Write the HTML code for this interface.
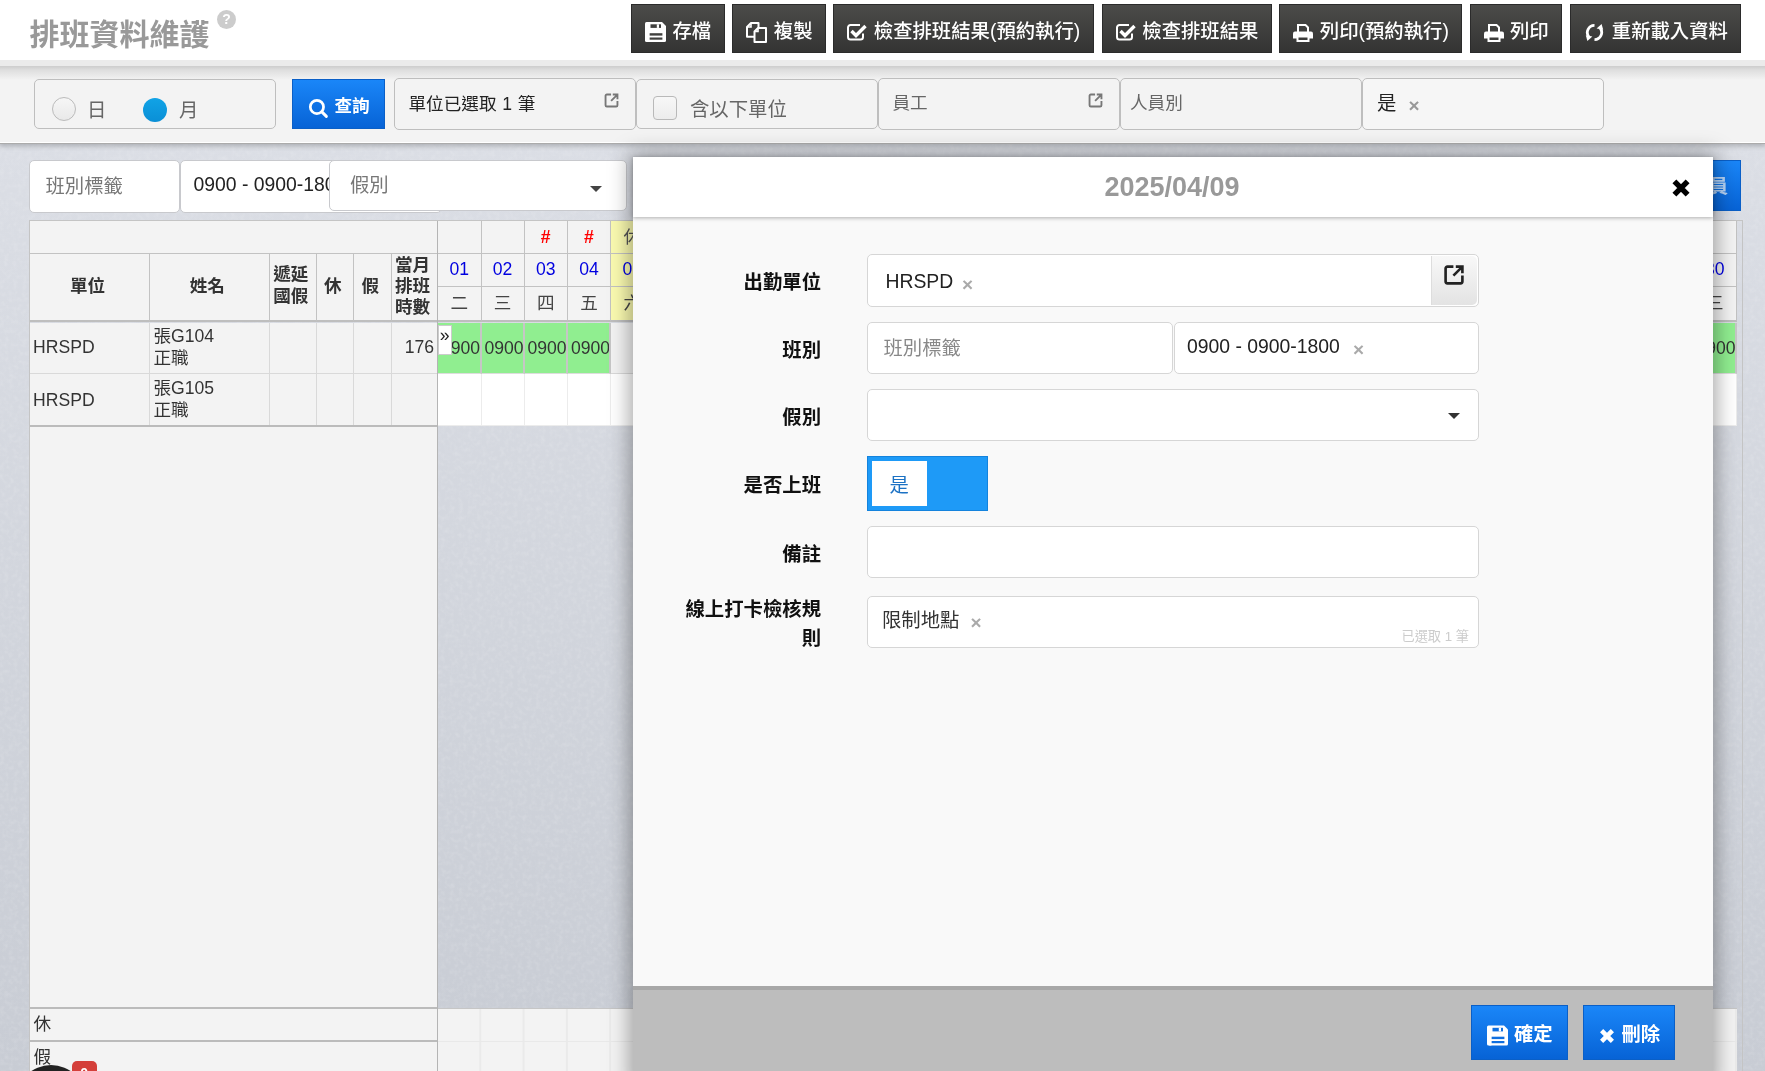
<!DOCTYPE html>
<html lang="zh-Hant">
<head>
<meta charset="utf-8">
<title>排班資料維護</title>
<style>
*{box-sizing:border-box;margin:0;padding:0}
html,body{width:1765px;height:1071px;overflow:hidden}
body{font-family:"Liberation Sans","Noto Sans CJK TC",sans-serif;font-size:16px;color:#222;background:#d0d3d9;position:relative}
.abs{position:absolute}
#root{position:absolute;left:0;top:0;width:1765px;height:1071px;overflow:hidden;will-change:transform;background:linear-gradient(to bottom,#dbdee5 140px,#c8ccd4 1071px)}
#hdr{left:0;top:0;width:1765px;height:60px;background:#fff}
#title{left:29.500px;top:13px;font-size:30px;font-weight:bold;color:#999;line-height:44px;white-space:nowrap}
#help{left:217px;top:10px;width:19px;height:19px;border-radius:50%;background:#ccc;color:#fff;font-size:14px;font-weight:bold;text-align:center;line-height:19px}
.tb{top:4px;height:49px;background:linear-gradient(#4b4b49,#343433);color:#fff;font-size:19.36px;font-weight:500;line-height:53px;white-space:nowrap;border:1px solid #2b2b2b}
.tb span{position:absolute;top:0}
#fbar{left:0;top:60px;width:1765px;height:83px;background:#f3f3f3;border-bottom:1.500px solid #fff;box-shadow:0 1px 0 #ababab,0 2px 5px 1px rgba(0,0,0,.22)}
#fbar:before{content:"";position:absolute;left:0;top:0;width:100%;height:20px;background:linear-gradient(#ebebeb 0,#ebebeb 6px,#cfcfcf 6.500px,#dedede 10px,#f3f3f3 20px)}
.fbox{background:#f3f3f3;border:1px solid #bebebe;border-radius:5px}
.ph{color:#666;white-space:nowrap}
.btn-blue{background:linear-gradient(#1a86f8,#0763d6);color:#fff;font-weight:bold}
.cell{position:absolute;border-right:1px solid #c2c2c2;border-bottom:1px solid #c2c2c2;background:#f3f3f3;white-space:nowrap}
.lab{left:640px;width:181px;text-align:right;font-size:19.36px;line-height:28px;font-weight:bold;color:#111;white-space:nowrap}
.fld{background:#fff;border:1px solid #d6d6d6;border-radius:5px}
</style>
</head>
<body>
<div id="root">
<svg width="0" height="0" style="position:absolute">
<defs>
<symbol id="i-save" viewBox="0 0 21 20"><path d="M0 1.500Q0 0 1.500 0H17L21 4V18.500Q21 20 19.500 20H1.500Q0 20 0 18.500Z" fill="currentColor"/><rect x="5.500" y="2.300" width="10.500" height="3.600" fill="var(--bg,#40403e)"/><rect x="11.800" y="2.300" width="2.200" height="3.600" fill="currentColor"/><rect x="4.400" y="11.200" width="13" height="2.400" fill="var(--bg,#40403e)"/><rect x="4.400" y="15.500" width="13" height="2.200" fill="var(--bg,#40403e)"/><rect x="2.200" y="9.300" width="2.200" height="10.700" fill="currentColor"/></symbol>
<symbol id="i-copy" viewBox="0 0 21 21"><path d="M5 1H12.500V14.800H1V5Z" fill="none" stroke="currentColor" stroke-width="2" stroke-linejoin="round"/><path d="M5 1V5H1" fill="none" stroke="currentColor" stroke-width="1.600"/><path d="M12 6H20V20H8.500V9.500Z" fill="var(--bg,#3e3e3c)" stroke="currentColor" stroke-width="2" stroke-linejoin="round"/><path d="M12 6V9.500H8.500" fill="none" stroke="currentColor" stroke-width="1.600"/></symbol>
<symbol id="i-check" viewBox="0 0 20 18"><path d="M16 10.500V14A2.500 2.500 0 0 1 13.500 16.500H3.500A2.500 2.500 0 0 1 1 14V4.500A2.500 2.500 0 0 1 3.500 2H13" fill="none" stroke="currentColor" stroke-width="2"/><path d="M4.500 8L9 12.500L18.500 3" fill="none" stroke="currentColor" stroke-width="3.400"/></symbol>
<symbol id="i-print" viewBox="0 0 20 18"><path d="M5 8V1H12.500L15 3.500V8" fill="none" stroke="currentColor" stroke-width="2"/><path d="M0 9.500Q0 7.500 2 7.500H18Q20 7.500 20 9.500V14.500H0Z" fill="currentColor"/><rect x="4.500" y="12.500" width="11" height="4.500" fill="var(--bg,#3c3c3a)" stroke="currentColor" stroke-width="2"/></symbol>
<symbol id="i-reload" viewBox="0 0 19 17"><path d="M9.500 1.400A7.100 7.100 0 0 0 3.800 12.800" fill="none" stroke="currentColor" stroke-width="2.800"/><path d="M0.800 11.200L7.400 12.400L2.400 17Z" fill="currentColor"/><path d="M9.500 15.600A7.100 7.100 0 0 0 15.200 4.200" fill="none" stroke="currentColor" stroke-width="2.800"/><path d="M18.200 5.800L11.600 4.600L16.600 0Z" fill="currentColor"/></symbol>
<symbol id="i-ext" viewBox="0 0 20 20"><path d="M9.500 3H4.500A1.500 1.500 0 0 0 3 4.500V15.500A1.500 1.500 0 0 0 4.500 17H15.500A1.500 1.500 0 0 0 17 15.500V10.500" fill="none" stroke="currentColor" stroke-width="2.200"/><path d="M11.500 3H17V8.500M17 3L9.500 10.500" fill="none" stroke="currentColor" stroke-width="2.200"/></symbol>
<symbol id="i-search" viewBox="0 0 20 20"><circle cx="8.500" cy="8.500" r="6.300" fill="none" stroke="currentColor" stroke-width="2.600"/><path d="M13.200 13.200L17.500 17.500" stroke="currentColor" stroke-width="2.800" stroke-linecap="round"/></symbol>
<symbol id="i-x" viewBox="0 0 20 20"><path d="M4 4L16 16M16 4L4 16" stroke="currentColor" stroke-width="5" stroke-linecap="butt"/></symbol>
</defs>
</svg>
<svg class="abs" style="left:0;top:143px;opacity:.32" width="1765" height="928"><filter id="nz" x="0" y="0" width="100%" height="100%"><feTurbulence type="fractalNoise" baseFrequency="0.22" numOctaves="2" seed="3"/><feColorMatrix type="matrix" values="0 0 0 0 1  0 0 0 0 1  0 0 0 0 1  0.9 0 0 0 -0.38"/></filter><rect width="1765" height="928" filter="url(#nz)"/></svg>
<div id="fbar" class="abs"></div>
<div id="hdr" class="abs"></div>
<div id="title" class="abs">排班資料維護</div>
<div id="help" class="abs">?</div>
<div class="abs tb" style="left:631px;width:94px"><svg class="abs" style="left:13px;top:17.4px" width="21" height="20"><use href="#i-save"/></svg><span style="left:40.4px">存檔</span></div>
<div class="abs tb" style="left:732px;width:94px"><svg class="abs" style="left:13px;top:16.8px" width="21" height="21"><use href="#i-copy"/></svg><span style="left:40.8px">複製</span></div>
<div class="abs tb" style="left:833px;width:261px"><svg class="abs" style="left:13px;top:18px" width="20" height="18"><use href="#i-check"/></svg><span style="left:39.8px">檢查排班結果(預約執行)</span></div>
<div class="abs tb" style="left:1102px;width:170px"><svg class="abs" style="left:13px;top:18px" width="20" height="18"><use href="#i-check"/></svg><span style="left:39.3px">檢查排班結果</span></div>
<div class="abs tb" style="left:1279px;width:183px"><svg class="abs" style="left:13px;top:18.5px" width="20" height="18"><use href="#i-print"/></svg><span style="left:39.8px">列印(預約執行)</span></div>
<div class="abs tb" style="left:1470px;width:92px"><svg class="abs" style="left:12.7px;top:18.5px" width="20" height="18"><use href="#i-print"/></svg><span style="left:39px">列印</span></div>
<div class="abs tb" style="left:1570px;width:171px"><svg class="abs" style="left:13.7px;top:18.7px" width="19" height="17"><use href="#i-reload"/></svg><span style="left:40.8px">重新載入資料</span></div>

<div class="abs fbox" style="left:34px;top:79px;width:242px;height:50px"></div>
<div class="abs" style="left:51.500px;top:96.500px;width:24px;height:24px;border-radius:50%;border:1px solid #bbb;background:linear-gradient(#f6f6f6,#e9e9e9)"></div>
<div class="abs" style="left:87px;top:96px;font-size:19.36px;line-height:28px;color:#666">日</div>
<div class="abs" style="left:143px;top:98px;width:24px;height:24px;border-radius:50%;background:linear-gradient(#11a3e6,#0a8fd6)"></div>
<div class="abs" style="left:179px;top:96px;font-size:19.36px;line-height:28px;color:#666">月</div>

<div class="abs btn-blue" style="left:292px;top:79px;width:93px;height:50px;border:1px solid #0a5fc7"></div>
<svg class="abs" style="left:308px;top:97.500px;color:#fff" width="21" height="21"><use href="#i-search"/></svg>
<div class="abs" style="left:334.500px;top:92px;font-size:17.600px;line-height:28px;color:#fff;font-weight:bold;white-space:nowrap">查詢</div>

<div class="abs fbox" style="left:394px;top:78px;width:242px;height:52px"></div>
<div class="abs" style="left:408.500px;top:90px;font-size:17.600px;line-height:28px;color:#222;white-space:nowrap;word-spacing:0.900px">單位已選取 1 筆</div>
<svg class="abs" style="left:603px;top:92px;color:#777" width="17" height="17"><use href="#i-ext"/></svg>

<div class="abs fbox" style="left:636px;top:79px;width:242px;height:50px"></div>
<div class="abs" style="left:653px;top:96px;width:24px;height:24px;border-radius:4px;border:1px solid #b9b9b9;background:linear-gradient(#f7f7f7,#ececec)"></div>
<div class="abs" style="left:690px;top:95px;font-size:19.36px;line-height:28px;color:#666;white-space:nowrap">含以下單位</div>

<div class="abs fbox" style="left:878px;top:78px;width:242px;height:52px"></div>
<div class="abs ph" style="left:892.500px;top:89px;font-size:17.600px;line-height:28px">員工</div>
<svg class="abs" style="left:1087px;top:92px;color:#777" width="17" height="17"><use href="#i-ext"/></svg>

<div class="abs fbox" style="left:1120px;top:78px;width:242px;height:52px"></div>
<div class="abs ph" style="left:1130px;top:89px;font-size:17.600px;line-height:28px">人員別</div>

<div class="abs fbox" style="left:1362px;top:78px;width:242px;height:52px;background:#f6f6f6"></div>
<div class="abs" style="left:1377px;top:89px;font-size:19.36px;line-height:28px;color:#222">是</div>
<div class="abs" style="left:1408.500px;top:92px;font-size:19px;line-height:28px;color:#999;font-weight:bold">×</div>

<div class="abs" style="left:29px;top:160px;width:151px;height:52.500px;background:#fff;border:1px solid #c8c9cd;border-radius:5px"></div>
<div class="abs" style="left:45.500px;top:172px;font-size:19.36px;line-height:28px;color:#777;white-space:nowrap">班別標籤</div>
<div class="abs" style="left:180px;top:160px;width:262px;height:52.500px;background:#fff;border:1px solid #c8c9cd;border-radius:5px;overflow:hidden"></div>
<div class="abs" style="left:193.500px;top:170px;font-size:19.36px;line-height:28px;color:#222;white-space:nowrap">0900 - 0900-1800</div>
<div class="abs" style="left:329px;top:160px;width:298px;height:51px;background:#fff;border:1px solid #c8c9cd;border-radius:5px"></div>
<div class="abs" style="left:350px;top:171px;font-size:19.36px;line-height:28px;color:#777;white-space:nowrap">假別</div>
<div class="abs" style="left:590px;top:186px;width:0;height:0;border-left:6px solid transparent;border-right:6px solid transparent;border-top:6px solid #444"></div>

<div class="abs btn-blue" style="left:1630px;top:160px;width:111px;height:51px;border:1px solid #0a5fc7"></div>
<div class="abs" style="left:1630px;top:172px;width:98px;text-align:right;font-size:19.36px;line-height:28px;color:rgba(255,255,255,.7);font-weight:bold;white-space:nowrap">選取人員</div>
<div class="abs" style="left:29px;top:220px;width:1714px;height:860px;border:1px solid #c4c4c4;border-bottom:0"></div>
<div class="cell" style="left:30px;top:221px;width:408px;height:32.5px;"></div>
<div class="cell" style="left:30px;top:253.5px;width:119.5px;height:68.5px;font-weight:bold;font-size:17.600px;line-height:22px;text-align:center;padding:21.5px 3.400px 0 0;color:#333;border-bottom:2px solid #bebebe;">單位</div>
<div class="cell" style="left:149.5px;top:253.5px;width:120px;height:68.5px;font-weight:bold;font-size:17.600px;line-height:22px;text-align:center;padding:21.5px 3.400px 0 0;color:#333;border-bottom:2px solid #bebebe;">姓名</div>
<div class="cell" style="left:269.5px;top:253.5px;width:47px;height:68.5px;font-weight:bold;font-size:17.600px;line-height:22px;text-align:center;padding:9px 3.400px 0 0;color:#333;border-bottom:2px solid #bebebe;">遞延<br>國假</div>
<div class="cell" style="left:316.5px;top:253.5px;width:37px;height:68.5px;font-weight:bold;font-size:17.600px;line-height:22px;text-align:center;padding:21.5px 3.400px 0 0;color:#333;border-bottom:2px solid #bebebe;">休</div>
<div class="cell" style="left:353.5px;top:253.5px;width:38px;height:68.5px;font-weight:bold;font-size:17.600px;line-height:22px;text-align:center;padding:21.5px 3.400px 0 0;color:#333;border-bottom:2px solid #bebebe;">假</div>
<div class="cell" style="left:391.5px;top:253.5px;width:46.5px;height:68.5px;font-weight:bold;font-size:17.600px;line-height:21.1px;text-align:center;padding:1.8px 3.400px 0 0;color:#333;border-bottom:2px solid #bebebe;">當月<br>排班<br>時數</div>
<div class="cell" style="left:438px;top:221px;width:43.5px;height:32.5px;text-align:center;font-size:17.600px;line-height:32px;color:#555;"></div>
<div class="cell" style="left:438px;top:253.5px;width:43.5px;height:33.5px;text-align:center;font-size:17.600px;line-height:31px;color:#0000e0;">01</div>
<div class="cell" style="left:438px;top:287px;width:43.5px;height:35px;text-align:center;font-size:17.600px;line-height:32px;color:#444;border-bottom:2px solid #bebebe;">二</div>
<div class="cell" style="left:438px;top:322.5px;width:43.5px;height:51px;padding-left:3px;font-size:17.600px;line-height:51px;color:#333;overflow:hidden;background:#90ee90;border-right:2px solid #c6c6c6;border-bottom:1px solid #ddd">0900</div>
<div class="cell" style="left:438px;top:373.5px;width:43.5px;height:52px;background:#fff;border-color:#ececec"></div>
<div class="cell" style="left:481.5px;top:221px;width:43px;height:32.5px;text-align:center;font-size:17.600px;line-height:32px;color:#555;"></div>
<div class="cell" style="left:481.5px;top:253.5px;width:43px;height:33.5px;text-align:center;font-size:17.600px;line-height:31px;color:#0000e0;">02</div>
<div class="cell" style="left:481.5px;top:287px;width:43px;height:35px;text-align:center;font-size:17.600px;line-height:32px;color:#444;border-bottom:2px solid #bebebe;">三</div>
<div class="cell" style="left:481.5px;top:322.5px;width:43px;height:51px;padding-left:3px;font-size:17.600px;line-height:51px;color:#333;overflow:hidden;background:#90ee90;border-right:2px solid #c6c6c6;border-bottom:1px solid #ddd">0900</div>
<div class="cell" style="left:481.5px;top:373.5px;width:43px;height:52px;background:#fff;border-color:#ececec"></div>
<div class="cell" style="left:524.5px;top:221px;width:43.5px;height:32.5px;text-align:center;font-size:17.600px;line-height:32px;color:#555;"><span style="color:#f00;font-weight:bold">#</span></div>
<div class="cell" style="left:524.5px;top:253.5px;width:43.5px;height:33.5px;text-align:center;font-size:17.600px;line-height:31px;color:#0000e0;">03</div>
<div class="cell" style="left:524.5px;top:287px;width:43.5px;height:35px;text-align:center;font-size:17.600px;line-height:32px;color:#444;border-bottom:2px solid #bebebe;">四</div>
<div class="cell" style="left:524.5px;top:322.5px;width:43.5px;height:51px;padding-left:3px;font-size:17.600px;line-height:51px;color:#333;overflow:hidden;background:#90ee90;border-right:2px solid #c6c6c6;border-bottom:1px solid #ddd">0900</div>
<div class="cell" style="left:524.5px;top:373.5px;width:43.5px;height:52px;background:#fff;border-color:#ececec"></div>
<div class="cell" style="left:568px;top:221px;width:43px;height:32.5px;text-align:center;font-size:17.600px;line-height:32px;color:#555;"><span style="color:#f00;font-weight:bold">#</span></div>
<div class="cell" style="left:568px;top:253.5px;width:43px;height:33.5px;text-align:center;font-size:17.600px;line-height:31px;color:#0000e0;">04</div>
<div class="cell" style="left:568px;top:287px;width:43px;height:35px;text-align:center;font-size:17.600px;line-height:32px;color:#444;border-bottom:2px solid #bebebe;">五</div>
<div class="cell" style="left:568px;top:322.5px;width:43px;height:51px;padding-left:3px;font-size:17.600px;line-height:51px;color:#333;overflow:hidden;background:#90ee90;border-right:2px solid #c6c6c6;border-bottom:1px solid #ddd">0900</div>
<div class="cell" style="left:568px;top:373.5px;width:43px;height:52px;background:#fff;border-color:#ececec"></div>
<div class="cell" style="left:611px;top:221px;width:43.5px;height:32.5px;text-align:center;font-size:17.600px;line-height:32px;color:#555;background:#fafab0;">休</div>
<div class="cell" style="left:611px;top:253.5px;width:43.5px;height:33.5px;text-align:center;font-size:17.600px;line-height:31px;color:#0000e0;background:#fafab0;">05</div>
<div class="cell" style="left:611px;top:287px;width:43.5px;height:35px;text-align:center;font-size:17.600px;line-height:32px;color:#444;border-bottom:2px solid #bebebe;background:#fafab0;">六</div>
<div class="cell" style="left:611px;top:322.5px;width:43.5px;height:51px;background:#f3f3f3;border-color:#d9d9d9"></div>
<div class="cell" style="left:611px;top:373.5px;width:43.5px;height:52px;background:#fff;border-color:#ececec"></div>
<div class="cell" style="left:654.5px;top:221px;width:43.5px;height:32.5px;text-align:center;font-size:17.600px;line-height:32px;color:#555;background:#fafab0;">休</div>
<div class="cell" style="left:654.5px;top:253.5px;width:43.5px;height:33.5px;text-align:center;font-size:17.600px;line-height:31px;color:#0000e0;background:#fafab0;">06</div>
<div class="cell" style="left:654.5px;top:287px;width:43.5px;height:35px;text-align:center;font-size:17.600px;line-height:32px;color:#444;border-bottom:2px solid #bebebe;background:#fafab0;">日</div>
<div class="cell" style="left:654.5px;top:322.5px;width:43.5px;height:51px;background:#f3f3f3;border-color:#d9d9d9"></div>
<div class="cell" style="left:654.5px;top:373.5px;width:43.5px;height:52px;background:#fff;border-color:#ececec"></div>
<div class="cell" style="left:698px;top:221px;width:43px;height:32.5px;text-align:center;font-size:17.600px;line-height:32px;color:#555;"></div>
<div class="cell" style="left:698px;top:253.5px;width:43px;height:33.5px;text-align:center;font-size:17.600px;line-height:31px;color:#0000e0;">07</div>
<div class="cell" style="left:698px;top:287px;width:43px;height:35px;text-align:center;font-size:17.600px;line-height:32px;color:#444;border-bottom:2px solid #bebebe;">一</div>
<div class="cell" style="left:698px;top:322.5px;width:43px;height:51px;padding-left:3px;font-size:17.600px;line-height:51px;color:#333;overflow:hidden;background:#90ee90;border-right:2px solid #c6c6c6;border-bottom:1px solid #ddd">0900</div>
<div class="cell" style="left:698px;top:373.5px;width:43px;height:52px;background:#fff;border-color:#ececec"></div>
<div class="cell" style="left:741px;top:221px;width:43.5px;height:32.5px;text-align:center;font-size:17.600px;line-height:32px;color:#555;"></div>
<div class="cell" style="left:741px;top:253.5px;width:43.5px;height:33.5px;text-align:center;font-size:17.600px;line-height:31px;color:#0000e0;">08</div>
<div class="cell" style="left:741px;top:287px;width:43.5px;height:35px;text-align:center;font-size:17.600px;line-height:32px;color:#444;border-bottom:2px solid #bebebe;">二</div>
<div class="cell" style="left:741px;top:322.5px;width:43.5px;height:51px;padding-left:3px;font-size:17.600px;line-height:51px;color:#333;overflow:hidden;background:#90ee90;border-right:2px solid #c6c6c6;border-bottom:1px solid #ddd">0900</div>
<div class="cell" style="left:741px;top:373.5px;width:43.5px;height:52px;background:#fff;border-color:#ececec"></div>
<div class="cell" style="left:784.5px;top:221px;width:43px;height:32.5px;text-align:center;font-size:17.600px;line-height:32px;color:#555;"></div>
<div class="cell" style="left:784.5px;top:253.5px;width:43px;height:33.5px;text-align:center;font-size:17.600px;line-height:31px;color:#0000e0;">09</div>
<div class="cell" style="left:784.5px;top:287px;width:43px;height:35px;text-align:center;font-size:17.600px;line-height:32px;color:#444;border-bottom:2px solid #bebebe;">三</div>
<div class="cell" style="left:784.5px;top:322.5px;width:43px;height:51px;padding-left:3px;font-size:17.600px;line-height:51px;color:#333;overflow:hidden;background:#90ee90;border-right:2px solid #c6c6c6;border-bottom:1px solid #ddd">0900</div>
<div class="cell" style="left:784.5px;top:373.5px;width:43px;height:52px;background:#fff;border-color:#ececec"></div>
<div class="cell" style="left:827.5px;top:221px;width:43.5px;height:32.5px;text-align:center;font-size:17.600px;line-height:32px;color:#555;"></div>
<div class="cell" style="left:827.5px;top:253.5px;width:43.5px;height:33.5px;text-align:center;font-size:17.600px;line-height:31px;color:#0000e0;">10</div>
<div class="cell" style="left:827.5px;top:287px;width:43.5px;height:35px;text-align:center;font-size:17.600px;line-height:32px;color:#444;border-bottom:2px solid #bebebe;">四</div>
<div class="cell" style="left:827.5px;top:322.5px;width:43.5px;height:51px;padding-left:3px;font-size:17.600px;line-height:51px;color:#333;overflow:hidden;background:#90ee90;border-right:2px solid #c6c6c6;border-bottom:1px solid #ddd">0900</div>
<div class="cell" style="left:827.5px;top:373.5px;width:43.5px;height:52px;background:#fff;border-color:#ececec"></div>
<div class="cell" style="left:871px;top:221px;width:43.5px;height:32.5px;text-align:center;font-size:17.600px;line-height:32px;color:#555;"></div>
<div class="cell" style="left:871px;top:253.5px;width:43.5px;height:33.5px;text-align:center;font-size:17.600px;line-height:31px;color:#0000e0;">11</div>
<div class="cell" style="left:871px;top:287px;width:43.5px;height:35px;text-align:center;font-size:17.600px;line-height:32px;color:#444;border-bottom:2px solid #bebebe;">五</div>
<div class="cell" style="left:871px;top:322.5px;width:43.5px;height:51px;padding-left:3px;font-size:17.600px;line-height:51px;color:#333;overflow:hidden;background:#90ee90;border-right:2px solid #c6c6c6;border-bottom:1px solid #ddd">0900</div>
<div class="cell" style="left:871px;top:373.5px;width:43.5px;height:52px;background:#fff;border-color:#ececec"></div>
<div class="cell" style="left:914.5px;top:221px;width:43px;height:32.5px;text-align:center;font-size:17.600px;line-height:32px;color:#555;background:#fafab0;">休</div>
<div class="cell" style="left:914.5px;top:253.5px;width:43px;height:33.5px;text-align:center;font-size:17.600px;line-height:31px;color:#0000e0;background:#fafab0;">12</div>
<div class="cell" style="left:914.5px;top:287px;width:43px;height:35px;text-align:center;font-size:17.600px;line-height:32px;color:#444;border-bottom:2px solid #bebebe;background:#fafab0;">六</div>
<div class="cell" style="left:914.5px;top:322.5px;width:43px;height:51px;background:#f3f3f3;border-color:#d9d9d9"></div>
<div class="cell" style="left:914.5px;top:373.5px;width:43px;height:52px;background:#fff;border-color:#ececec"></div>
<div class="cell" style="left:957.5px;top:221px;width:43.5px;height:32.5px;text-align:center;font-size:17.600px;line-height:32px;color:#555;background:#fafab0;">休</div>
<div class="cell" style="left:957.5px;top:253.5px;width:43.5px;height:33.5px;text-align:center;font-size:17.600px;line-height:31px;color:#0000e0;background:#fafab0;">13</div>
<div class="cell" style="left:957.5px;top:287px;width:43.5px;height:35px;text-align:center;font-size:17.600px;line-height:32px;color:#444;border-bottom:2px solid #bebebe;background:#fafab0;">日</div>
<div class="cell" style="left:957.5px;top:322.5px;width:43.5px;height:51px;background:#f3f3f3;border-color:#d9d9d9"></div>
<div class="cell" style="left:957.5px;top:373.5px;width:43.5px;height:52px;background:#fff;border-color:#ececec"></div>
<div class="cell" style="left:1001px;top:221px;width:43px;height:32.5px;text-align:center;font-size:17.600px;line-height:32px;color:#555;"></div>
<div class="cell" style="left:1001px;top:253.5px;width:43px;height:33.5px;text-align:center;font-size:17.600px;line-height:31px;color:#0000e0;">14</div>
<div class="cell" style="left:1001px;top:287px;width:43px;height:35px;text-align:center;font-size:17.600px;line-height:32px;color:#444;border-bottom:2px solid #bebebe;">一</div>
<div class="cell" style="left:1001px;top:322.5px;width:43px;height:51px;padding-left:3px;font-size:17.600px;line-height:51px;color:#333;overflow:hidden;background:#90ee90;border-right:2px solid #c6c6c6;border-bottom:1px solid #ddd">0900</div>
<div class="cell" style="left:1001px;top:373.5px;width:43px;height:52px;background:#fff;border-color:#ececec"></div>
<div class="cell" style="left:1044px;top:221px;width:43.5px;height:32.5px;text-align:center;font-size:17.600px;line-height:32px;color:#555;"></div>
<div class="cell" style="left:1044px;top:253.5px;width:43.5px;height:33.5px;text-align:center;font-size:17.600px;line-height:31px;color:#0000e0;">15</div>
<div class="cell" style="left:1044px;top:287px;width:43.5px;height:35px;text-align:center;font-size:17.600px;line-height:32px;color:#444;border-bottom:2px solid #bebebe;">二</div>
<div class="cell" style="left:1044px;top:322.5px;width:43.5px;height:51px;padding-left:3px;font-size:17.600px;line-height:51px;color:#333;overflow:hidden;background:#90ee90;border-right:2px solid #c6c6c6;border-bottom:1px solid #ddd">0900</div>
<div class="cell" style="left:1044px;top:373.5px;width:43.5px;height:52px;background:#fff;border-color:#ececec"></div>
<div class="cell" style="left:1087.5px;top:221px;width:43.5px;height:32.5px;text-align:center;font-size:17.600px;line-height:32px;color:#555;"></div>
<div class="cell" style="left:1087.5px;top:253.5px;width:43.5px;height:33.5px;text-align:center;font-size:17.600px;line-height:31px;color:#0000e0;">16</div>
<div class="cell" style="left:1087.5px;top:287px;width:43.5px;height:35px;text-align:center;font-size:17.600px;line-height:32px;color:#444;border-bottom:2px solid #bebebe;">三</div>
<div class="cell" style="left:1087.5px;top:322.5px;width:43.5px;height:51px;padding-left:3px;font-size:17.600px;line-height:51px;color:#333;overflow:hidden;background:#90ee90;border-right:2px solid #c6c6c6;border-bottom:1px solid #ddd">0900</div>
<div class="cell" style="left:1087.5px;top:373.5px;width:43.5px;height:52px;background:#fff;border-color:#ececec"></div>
<div class="cell" style="left:1131px;top:221px;width:43px;height:32.5px;text-align:center;font-size:17.600px;line-height:32px;color:#555;"></div>
<div class="cell" style="left:1131px;top:253.5px;width:43px;height:33.5px;text-align:center;font-size:17.600px;line-height:31px;color:#0000e0;">17</div>
<div class="cell" style="left:1131px;top:287px;width:43px;height:35px;text-align:center;font-size:17.600px;line-height:32px;color:#444;border-bottom:2px solid #bebebe;">四</div>
<div class="cell" style="left:1131px;top:322.5px;width:43px;height:51px;padding-left:3px;font-size:17.600px;line-height:51px;color:#333;overflow:hidden;background:#90ee90;border-right:2px solid #c6c6c6;border-bottom:1px solid #ddd">0900</div>
<div class="cell" style="left:1131px;top:373.5px;width:43px;height:52px;background:#fff;border-color:#ececec"></div>
<div class="cell" style="left:1174px;top:221px;width:43.5px;height:32.5px;text-align:center;font-size:17.600px;line-height:32px;color:#555;"></div>
<div class="cell" style="left:1174px;top:253.5px;width:43.5px;height:33.5px;text-align:center;font-size:17.600px;line-height:31px;color:#0000e0;">18</div>
<div class="cell" style="left:1174px;top:287px;width:43.5px;height:35px;text-align:center;font-size:17.600px;line-height:32px;color:#444;border-bottom:2px solid #bebebe;">五</div>
<div class="cell" style="left:1174px;top:322.5px;width:43.5px;height:51px;padding-left:3px;font-size:17.600px;line-height:51px;color:#333;overflow:hidden;background:#90ee90;border-right:2px solid #c6c6c6;border-bottom:1px solid #ddd">0900</div>
<div class="cell" style="left:1174px;top:373.5px;width:43.5px;height:52px;background:#fff;border-color:#ececec"></div>
<div class="cell" style="left:1217.5px;top:221px;width:43px;height:32.5px;text-align:center;font-size:17.600px;line-height:32px;color:#555;background:#fafab0;">休</div>
<div class="cell" style="left:1217.5px;top:253.5px;width:43px;height:33.5px;text-align:center;font-size:17.600px;line-height:31px;color:#0000e0;background:#fafab0;">19</div>
<div class="cell" style="left:1217.5px;top:287px;width:43px;height:35px;text-align:center;font-size:17.600px;line-height:32px;color:#444;border-bottom:2px solid #bebebe;background:#fafab0;">六</div>
<div class="cell" style="left:1217.5px;top:322.5px;width:43px;height:51px;background:#f3f3f3;border-color:#d9d9d9"></div>
<div class="cell" style="left:1217.5px;top:373.5px;width:43px;height:52px;background:#fff;border-color:#ececec"></div>
<div class="cell" style="left:1260.5px;top:221px;width:43.5px;height:32.5px;text-align:center;font-size:17.600px;line-height:32px;color:#555;background:#fafab0;">休</div>
<div class="cell" style="left:1260.5px;top:253.5px;width:43.5px;height:33.5px;text-align:center;font-size:17.600px;line-height:31px;color:#0000e0;background:#fafab0;">20</div>
<div class="cell" style="left:1260.5px;top:287px;width:43.5px;height:35px;text-align:center;font-size:17.600px;line-height:32px;color:#444;border-bottom:2px solid #bebebe;background:#fafab0;">日</div>
<div class="cell" style="left:1260.5px;top:322.5px;width:43.5px;height:51px;background:#f3f3f3;border-color:#d9d9d9"></div>
<div class="cell" style="left:1260.5px;top:373.5px;width:43.5px;height:52px;background:#fff;border-color:#ececec"></div>
<div class="cell" style="left:1304px;top:221px;width:43.5px;height:32.5px;text-align:center;font-size:17.600px;line-height:32px;color:#555;"></div>
<div class="cell" style="left:1304px;top:253.5px;width:43.5px;height:33.5px;text-align:center;font-size:17.600px;line-height:31px;color:#0000e0;">21</div>
<div class="cell" style="left:1304px;top:287px;width:43.5px;height:35px;text-align:center;font-size:17.600px;line-height:32px;color:#444;border-bottom:2px solid #bebebe;">一</div>
<div class="cell" style="left:1304px;top:322.5px;width:43.5px;height:51px;padding-left:3px;font-size:17.600px;line-height:51px;color:#333;overflow:hidden;background:#90ee90;border-right:2px solid #c6c6c6;border-bottom:1px solid #ddd">0900</div>
<div class="cell" style="left:1304px;top:373.5px;width:43.5px;height:52px;background:#fff;border-color:#ececec"></div>
<div class="cell" style="left:1347.5px;top:221px;width:43px;height:32.5px;text-align:center;font-size:17.600px;line-height:32px;color:#555;"></div>
<div class="cell" style="left:1347.5px;top:253.5px;width:43px;height:33.5px;text-align:center;font-size:17.600px;line-height:31px;color:#0000e0;">22</div>
<div class="cell" style="left:1347.5px;top:287px;width:43px;height:35px;text-align:center;font-size:17.600px;line-height:32px;color:#444;border-bottom:2px solid #bebebe;">二</div>
<div class="cell" style="left:1347.5px;top:322.5px;width:43px;height:51px;padding-left:3px;font-size:17.600px;line-height:51px;color:#333;overflow:hidden;background:#90ee90;border-right:2px solid #c6c6c6;border-bottom:1px solid #ddd">0900</div>
<div class="cell" style="left:1347.5px;top:373.5px;width:43px;height:52px;background:#fff;border-color:#ececec"></div>
<div class="cell" style="left:1390.5px;top:221px;width:43.5px;height:32.5px;text-align:center;font-size:17.600px;line-height:32px;color:#555;"></div>
<div class="cell" style="left:1390.5px;top:253.5px;width:43.5px;height:33.5px;text-align:center;font-size:17.600px;line-height:31px;color:#0000e0;">23</div>
<div class="cell" style="left:1390.5px;top:287px;width:43.5px;height:35px;text-align:center;font-size:17.600px;line-height:32px;color:#444;border-bottom:2px solid #bebebe;">三</div>
<div class="cell" style="left:1390.5px;top:322.5px;width:43.5px;height:51px;padding-left:3px;font-size:17.600px;line-height:51px;color:#333;overflow:hidden;background:#90ee90;border-right:2px solid #c6c6c6;border-bottom:1px solid #ddd">0900</div>
<div class="cell" style="left:1390.5px;top:373.5px;width:43.5px;height:52px;background:#fff;border-color:#ececec"></div>
<div class="cell" style="left:1434px;top:221px;width:43px;height:32.5px;text-align:center;font-size:17.600px;line-height:32px;color:#555;"></div>
<div class="cell" style="left:1434px;top:253.5px;width:43px;height:33.5px;text-align:center;font-size:17.600px;line-height:31px;color:#0000e0;">24</div>
<div class="cell" style="left:1434px;top:287px;width:43px;height:35px;text-align:center;font-size:17.600px;line-height:32px;color:#444;border-bottom:2px solid #bebebe;">四</div>
<div class="cell" style="left:1434px;top:322.5px;width:43px;height:51px;padding-left:3px;font-size:17.600px;line-height:51px;color:#333;overflow:hidden;background:#90ee90;border-right:2px solid #c6c6c6;border-bottom:1px solid #ddd">0900</div>
<div class="cell" style="left:1434px;top:373.5px;width:43px;height:52px;background:#fff;border-color:#ececec"></div>
<div class="cell" style="left:1477px;top:221px;width:43.5px;height:32.5px;text-align:center;font-size:17.600px;line-height:32px;color:#555;"></div>
<div class="cell" style="left:1477px;top:253.5px;width:43.5px;height:33.5px;text-align:center;font-size:17.600px;line-height:31px;color:#0000e0;">25</div>
<div class="cell" style="left:1477px;top:287px;width:43.5px;height:35px;text-align:center;font-size:17.600px;line-height:32px;color:#444;border-bottom:2px solid #bebebe;">五</div>
<div class="cell" style="left:1477px;top:322.5px;width:43.5px;height:51px;padding-left:3px;font-size:17.600px;line-height:51px;color:#333;overflow:hidden;background:#90ee90;border-right:2px solid #c6c6c6;border-bottom:1px solid #ddd">0900</div>
<div class="cell" style="left:1477px;top:373.5px;width:43.5px;height:52px;background:#fff;border-color:#ececec"></div>
<div class="cell" style="left:1520.5px;top:221px;width:43.5px;height:32.5px;text-align:center;font-size:17.600px;line-height:32px;color:#555;background:#fafab0;">休</div>
<div class="cell" style="left:1520.5px;top:253.5px;width:43.5px;height:33.5px;text-align:center;font-size:17.600px;line-height:31px;color:#0000e0;background:#fafab0;">26</div>
<div class="cell" style="left:1520.5px;top:287px;width:43.5px;height:35px;text-align:center;font-size:17.600px;line-height:32px;color:#444;border-bottom:2px solid #bebebe;background:#fafab0;">六</div>
<div class="cell" style="left:1520.5px;top:322.5px;width:43.5px;height:51px;background:#f3f3f3;border-color:#d9d9d9"></div>
<div class="cell" style="left:1520.5px;top:373.5px;width:43.5px;height:52px;background:#fff;border-color:#ececec"></div>
<div class="cell" style="left:1564px;top:221px;width:43px;height:32.5px;text-align:center;font-size:17.600px;line-height:32px;color:#555;background:#fafab0;">休</div>
<div class="cell" style="left:1564px;top:253.5px;width:43px;height:33.5px;text-align:center;font-size:17.600px;line-height:31px;color:#0000e0;background:#fafab0;">27</div>
<div class="cell" style="left:1564px;top:287px;width:43px;height:35px;text-align:center;font-size:17.600px;line-height:32px;color:#444;border-bottom:2px solid #bebebe;background:#fafab0;">日</div>
<div class="cell" style="left:1564px;top:322.5px;width:43px;height:51px;background:#f3f3f3;border-color:#d9d9d9"></div>
<div class="cell" style="left:1564px;top:373.5px;width:43px;height:52px;background:#fff;border-color:#ececec"></div>
<div class="cell" style="left:1607px;top:221px;width:43.5px;height:32.5px;text-align:center;font-size:17.600px;line-height:32px;color:#555;"></div>
<div class="cell" style="left:1607px;top:253.5px;width:43.5px;height:33.5px;text-align:center;font-size:17.600px;line-height:31px;color:#0000e0;">28</div>
<div class="cell" style="left:1607px;top:287px;width:43.5px;height:35px;text-align:center;font-size:17.600px;line-height:32px;color:#444;border-bottom:2px solid #bebebe;">一</div>
<div class="cell" style="left:1607px;top:322.5px;width:43.5px;height:51px;padding-left:3px;font-size:17.600px;line-height:51px;color:#333;overflow:hidden;background:#90ee90;border-right:2px solid #c6c6c6;border-bottom:1px solid #ddd">0900</div>
<div class="cell" style="left:1607px;top:373.5px;width:43.5px;height:52px;background:#fff;border-color:#ececec"></div>
<div class="cell" style="left:1650.5px;top:221px;width:43px;height:32.5px;text-align:center;font-size:17.600px;line-height:32px;color:#555;"></div>
<div class="cell" style="left:1650.5px;top:253.5px;width:43px;height:33.5px;text-align:center;font-size:17.600px;line-height:31px;color:#0000e0;">29</div>
<div class="cell" style="left:1650.5px;top:287px;width:43px;height:35px;text-align:center;font-size:17.600px;line-height:32px;color:#444;border-bottom:2px solid #bebebe;">二</div>
<div class="cell" style="left:1650.5px;top:322.5px;width:43px;height:51px;padding-left:3px;font-size:17.600px;line-height:51px;color:#333;overflow:hidden;background:#90ee90;border-right:2px solid #c6c6c6;border-bottom:1px solid #ddd">0900</div>
<div class="cell" style="left:1650.5px;top:373.5px;width:43px;height:52px;background:#fff;border-color:#ececec"></div>
<div class="cell" style="left:1693.5px;top:221px;width:43.5px;height:32.5px;text-align:center;font-size:17.600px;line-height:32px;color:#555;"></div>
<div class="cell" style="left:1693.5px;top:253.5px;width:43.5px;height:33.5px;text-align:center;font-size:17.600px;line-height:31px;color:#0000e0;">30</div>
<div class="cell" style="left:1693.5px;top:287px;width:43.5px;height:35px;text-align:center;font-size:17.600px;line-height:32px;color:#444;border-bottom:2px solid #bebebe;">三</div>
<div class="cell" style="left:1693.5px;top:322.5px;width:43.5px;height:51px;padding-left:3px;font-size:17.600px;line-height:51px;color:#333;overflow:hidden;background:#90ee90;border-right:2px solid #c6c6c6;border-bottom:1px solid #ddd">0900</div>
<div class="cell" style="left:1693.5px;top:373.5px;width:43.5px;height:52px;background:#fff;border-color:#ececec"></div>
<div class="cell" style="left:30px;top:322.5px;width:119.5px;height:51px;border-color:#d9d9d9;font-size:17.600px;line-height:48px;padding-left:3px;color:#333">HRSPD</div>
<div class="cell" style="left:149.5px;top:322.5px;width:120px;height:51px;border-color:#d9d9d9;font-size:17.600px;line-height:21.5px;padding:3.5px 0 0 4px;color:#333">張G104<br>正職</div>
<div class="cell" style="left:269.5px;top:322.5px;width:47px;height:51px;border-color:#d9d9d9;"></div>
<div class="cell" style="left:316.5px;top:322.5px;width:37px;height:51px;border-color:#d9d9d9;"></div>
<div class="cell" style="left:353.5px;top:322.5px;width:38px;height:51px;border-color:#d9d9d9;"></div>
<div class="cell" style="left:391.5px;top:322.5px;width:46.5px;height:51px;border-color:#d9d9d9;font-size:17.600px;line-height:48px;text-align:right;padding-right:3px;color:#333">176</div>
<div class="cell" style="left:30px;top:373.5px;width:119.5px;height:52px;border-color:#d9d9d9;font-size:17.600px;line-height:52px;padding-left:3px;color:#333">HRSPD</div>
<div class="cell" style="left:149.5px;top:373.5px;width:120px;height:52px;border-color:#d9d9d9;font-size:17.600px;line-height:21.5px;padding:4.8px 0 0 4px;color:#333">張G105<br>正職</div>
<div class="cell" style="left:269.5px;top:373.5px;width:47px;height:52px;border-color:#d9d9d9;"></div>
<div class="cell" style="left:316.5px;top:373.5px;width:37px;height:52px;border-color:#d9d9d9;"></div>
<div class="cell" style="left:353.5px;top:373.5px;width:38px;height:52px;border-color:#d9d9d9;"></div>
<div class="cell" style="left:391.5px;top:373.5px;width:46.5px;height:52px;border-color:#d9d9d9;font-size:17.600px;line-height:52px;text-align:right;padding-right:3px;color:#333"></div>
<div class="abs" style="left:30px;top:425px;width:408px;height:584px;background:#f3f3f3;border-top:2px solid #bbb;border-bottom:2px solid #bbb"></div>
<div class="abs" style="left:437px;top:221px;width:1px;height:860px;background:#b4b4b4"></div>
<div class="abs" style="left:30px;top:1009px;width:407px;height:32.500px;background:#f3f3f3;border-bottom:2px solid #bbb;font-size:17.600px;line-height:30px;padding-left:3.500px;color:#333">休</div>
<div class="abs" style="left:30px;top:1041.500px;width:407px;height:33px;background:#f3f3f3;font-size:17.600px;line-height:31px;padding-left:3.500px;color:#333">假</div>
<div class="abs" style="left:438px;top:1008px;width:1299px;height:70px;background:#f3f3f3;border-top:1px solid #c6c6c6;background-image:linear-gradient(to right,#eaeaea 1.500px,transparent 1.500px);background-size:43.300px 100%;background-position:41.300px 0"></div>
<div class="abs" style="left:438px;top:1040.500px;width:1299px;height:1px;background:#e9e9e9"></div>
<div class="abs" style="left:16px;top:1064.500px;width:70px;height:70px;border-radius:50%;background:#222"></div>
<div class="abs" style="left:71.500px;top:1061px;width:25.500px;height:24px;border-radius:5px;background:#d43f3a;color:#fff;font-size:14px;font-weight:bold;text-align:center;line-height:24px">0</div>
<div class="abs" style="left:437.500px;top:325px;width:14.500px;height:29.500px;background:#fff;border:1px solid #ccc;font-size:17.600px;line-height:18px;text-align:center;color:#222">»</div>

<div class="abs" style="left:633px;top:157px;width:1080px;height:930px;box-shadow:0 0 20px 3px rgba(0,0,0,.36)"></div>
<div class="abs" style="left:633px;top:216px;width:1080px;height:771px;background:#f9f9f9"></div>
<div class="abs" style="left:633px;top:157px;width:1080px;height:59.500px;background:#fff;box-shadow:0 1px 4px rgba(0,0,0,.3)"></div>
<div class="abs" style="left:633px;top:168px;width:1080px;text-align:center;font-size:27px;line-height:38px;font-weight:bold;color:#999;padding-right:2px">2025/04/09</div>
<svg class="abs" style="left:1670px;top:177px;color:#000" width="22" height="22"><use href="#i-x"/></svg>

<div class="abs" style="left:633px;top:986px;width:1080px;height:90px;background:#bdbdbd;border-top:4px solid #a8a8a8"></div>
<div class="abs btn-blue" style="left:1471px;top:1005px;width:97px;height:55px;border:1px solid #0a5fc7"></div>
<svg class="abs" style="left:1487px;top:1025px;color:#fff;--bg:#0f6fe0" width="21" height="21"><use href="#i-save"/></svg>
<div class="abs" style="left:1514px;top:1019.600px;font-size:19.36px;line-height:28px;color:#fff;font-weight:bold;white-space:nowrap">確定</div>
<div class="abs btn-blue" style="left:1583px;top:1005px;width:92px;height:55px;border:1px solid #0a5fc7"></div>
<svg class="abs" style="left:1597.500px;top:1026.500px;color:#fff" width="18" height="18"><use href="#i-x"/></svg>
<div class="abs" style="left:1621.500px;top:1019.600px;font-size:19.36px;line-height:28px;color:#fff;font-weight:bold;white-space:nowrap">刪除</div>
<div class="abs lab" style="top:267.7px">出勤單位</div>
<div class="abs fld" style="left:867px;top:254px;width:611.5px;height:52.5px;"></div>
<div class="abs" style="left:1431px;top:256px;width:46px;height:48.500px;background:linear-gradient(#f8f8f8,#e3e3e3);border-left:1px solid #ddd;border-radius:0 5px 5px 0"></div>
<svg class="abs" style="left:1442px;top:263px;color:#222" width="24" height="24"><use href="#i-ext"/></svg>
<div class="abs" style="left:885.5px;top:266.5px;font-size:19.36px;line-height:28px;color:#222;white-space:nowrap;">HRSPD</div>
<div class="abs" style="left:962px;top:270.5px;font-size:19px;line-height:28px;color:#aaa;white-space:nowrap;font-weight:bold">×</div>
<div class="abs lab" style="top:335.7px">班別</div>
<div class="abs fld" style="left:867px;top:322px;width:305.5px;height:51.5px;"></div>
<div class="abs fld" style="left:1173.5px;top:322px;width:305px;height:51.5px;"></div>
<div class="abs" style="left:883.5px;top:334px;font-size:19.36px;line-height:28px;color:#888;white-space:nowrap;">班別標籤</div>
<div class="abs" style="left:1187px;top:332px;font-size:19.36px;line-height:28px;color:#222;white-space:nowrap;">0900 - 0900-1800</div>
<div class="abs" style="left:1353px;top:335.5px;font-size:19px;line-height:28px;color:#aaa;white-space:nowrap;font-weight:bold">×</div>
<div class="abs lab" style="top:402.7px">假別</div>
<div class="abs fld" style="left:867px;top:389px;width:611.5px;height:51.5px;"></div>
<div class="abs" style="left:1448px;top:413px;width:0;height:0;border-left:6px solid transparent;border-right:6px solid transparent;border-top:6px solid #333"></div>
<div class="abs lab" style="top:471px">是否上班</div>
<div class="abs" style="left:867px;top:456px;width:121px;height:54.500px;background:#1e9af7;border:1px solid #1483dd"></div>
<div class="abs" style="left:872px;top:461px;width:55px;height:45px;background:#fff"></div>
<div class="abs" style="left:889.5px;top:471px;font-size:19.36px;line-height:28px;color:#1c72c4;white-space:nowrap;">是</div>
<div class="abs lab" style="top:539.7px">備註</div>
<div class="abs fld" style="left:867px;top:526px;width:611.5px;height:51.5px;"></div>
<div class="abs lab" style="top:595.2px">線上打卡檢核規</div>
<div class="abs lab" style="top:624.4px">則</div>
<div class="abs fld" style="left:867px;top:596px;width:611.5px;height:51.5px;"></div>
<div class="abs" style="left:882px;top:606px;font-size:19.36px;line-height:28px;color:#333;white-space:nowrap;">限制地點</div>
<div class="abs" style="left:970.5px;top:609px;font-size:19px;line-height:28px;color:#aaa;white-space:nowrap;font-weight:bold">×</div>
<div class="abs" style="left:1401.5px;top:622.5px;font-size:13.2px;line-height:28px;color:#ccc;white-space:nowrap;">已選取 1 筆</div>
</div>
</body>
</html>
